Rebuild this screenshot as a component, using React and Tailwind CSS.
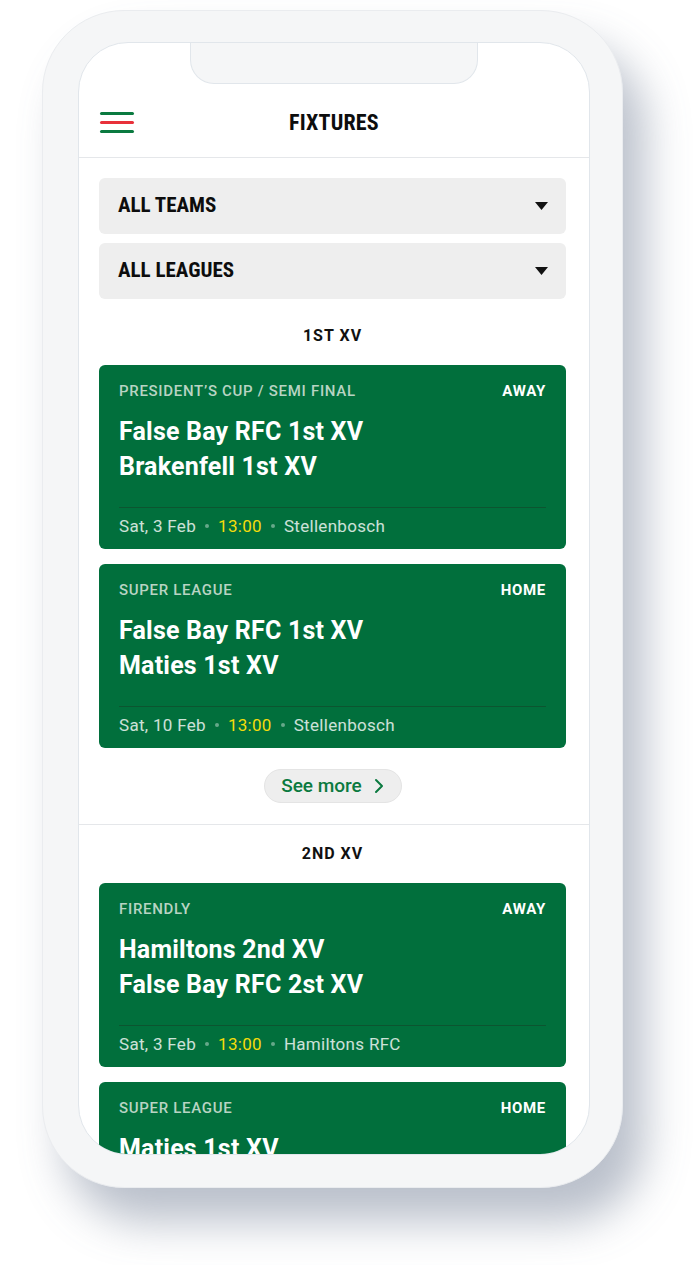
const fixturesA = [
  {
    league: "PRESIDENT\u2019S CUP / SEMI FINAL",
    venue: "AWAY",
    home: "False Bay RFC 1st XV",
    away: "Brakenfell 1st XV",
    date: "Sat, 3 Feb",
    time: "13:00",
    place: "Stellenbosch",
  },
  {
    league: "SUPER LEAGUE",
    venue: "HOME",
    home: "False Bay RFC 1st XV",
    away: "Maties 1st XV",
    date: "Sat, 10 Feb",
    time: "13:00",
    place: "Stellenbosch",
  },
];

const fixturesB = [
  {
    league: "FIRENDLY",
    venue: "AWAY",
    home: "Hamiltons 2nd XV",
    away: "False Bay RFC 2st XV",
    date: "Sat, 3 Feb",
    time: "13:00",
    place: "Hamiltons RFC",
  },
  {
    league: "SUPER LEAGUE",
    venue: "HOME",
    home: "Maties 1st XV",
    away: "False Bay RFC 2nd XV",
    date: "Sat, 10 Feb",
    time: "13:00",
    place: "Stellenbosch",
  },
];

const condensed = {
  fontFamily: '"Roboto Condensed", "Liberation Sans Narrow", "DejaVu Sans Condensed", sans-serif',
};

const Caret = () => (
  <svg width="13" height="8" viewBox="0 0 13 8">
    <polygon points="0,0 13,0 6.5,8" fill="#111" />
  </svg>
);

const Select = ({ label }) => (
  <div className="h-[56px] rounded-[6px] bg-[#eeeeee] flex items-center justify-between pl-[19px] pr-[18px]">
    <span className="text-[21px] font-bold text-[#0d0d0d]" style={condensed}>{label}</span>
    <Caret />
  </div>
);

const Dot = () => <span className="w-[4px] h-[4px] rounded-full bg-white/40 mx-[9px]" />;

const Card = ({ f }) => (
  <div className="rounded-[6px] bg-[#016f3c] px-[20px] pt-[18px] pb-[13px] text-white">
    <div className="flex justify-between items-center text-[15px] leading-[16px] font-medium tracking-[0.7px]">
      <span className="text-[#b8d4c3]">{f.league}</span>
      <span className="font-bold">{f.venue}</span>
    </div>
    <div className="mt-[15px] text-[25px] leading-[35px] font-bold tracking-[0.2px]">
      <div>{f.home}</div>
      <div>{f.away}</div>
    </div>
    <div className="mt-[23px] h-px bg-[#0c5530]" />
    <div className="mt-[8px] flex items-center text-[17px] leading-[20px] tracking-[0.3px] text-white/80">
      <span>{f.date}</span>
      <Dot />
      <span className="text-[#f4dc0b]">{f.time}</span>
      <Dot />
      <span>{f.place}</span>
    </div>
  </div>
);

export default function App() {
  return (
    <div className="w-[700px] h-[1265px] bg-white pl-[42px] pt-[10px] overflow-hidden" style={{ fontFamily: "Roboto, sans-serif" }}>
      <div className="w-[581px] h-[1178px] rounded-[82px] bg-[#f5f6f7] border border-[#eaecef] pt-[31px] pl-[35px] shadow-[22px_34px_44px_rgba(90,104,130,0.42)]">
        <div className="relative w-[512px] h-[1113px] rounded-[50px] overflow-hidden bg-white border border-[#e1e6eb]">
          <div className="absolute top-0 left-1/2 -translate-x-1/2 w-[288px] h-[41px] bg-[#f5f6f7] rounded-b-[24px] border border-t-0 border-[#e1e6eb]" />

          <div className="h-[115px] pt-[44px] px-[21px] border-b border-[#e5e7ea] grid grid-cols-[1fr_auto_1fr] items-center">
            <div className="flex flex-col gap-[6px]">
              <span className="w-[34px] h-[3px] rounded-full bg-[#0b7a40]" />
              <span className="w-[34px] h-[3px] rounded-full bg-[#e8313a]" />
              <span className="w-[34px] h-[3px] rounded-full bg-[#0b7a40]" />
            </div>
            <h1 className="text-[22px] font-bold text-[#0d0d0d] tracking-[0.2px]" style={condensed}>FIXTURES</h1>
            <div />
          </div>

          <div className="pl-[20px] pr-[23px] pt-[20px]">
            <div className="flex flex-col gap-[9px]">
              <Select label="ALL TEAMS" />
              <Select label="ALL LEAGUES" />
            </div>
            <h2 className="pt-[27px] pb-[19px] text-center text-[16px] leading-[20px] font-bold tracking-[1px] text-[#111]">1ST XV</h2>
            <div className="flex flex-col gap-[15px]">
              {fixturesA.map((f, i) => (
                <Card key={i} f={f} />
              ))}
            </div>
            <div className="flex justify-center mt-[21px]">
              <button className="h-[34px] w-[138px] rounded-full bg-[#eeeeee] border border-[#e4e4e4] flex items-center justify-center gap-[12px] text-[#0b7a40] text-[19px] font-medium">
                See more
                <svg width="10" height="16" viewBox="0 0 10 16" fill="none">
                  <path d="M2 2l6 6-6 6" stroke="#0b7a40" strokeWidth="2" strokeLinecap="round" strokeLinejoin="round" />
                </svg>
              </button>
            </div>
          </div>

          <div className="mt-[21px] border-t border-[#e5e7ea] pl-[20px] pr-[23px]">
            <h2 className="pt-[19px] pb-[19px] text-center text-[16px] leading-[20px] font-bold tracking-[1px] text-[#111]">2ND XV</h2>
            <div className="flex flex-col gap-[15px]">
              {fixturesB.map((f, i) => (
                <Card key={i} f={f} />
              ))}
            </div>
          </div>
        </div>
      </div>
    </div>
  );
}
